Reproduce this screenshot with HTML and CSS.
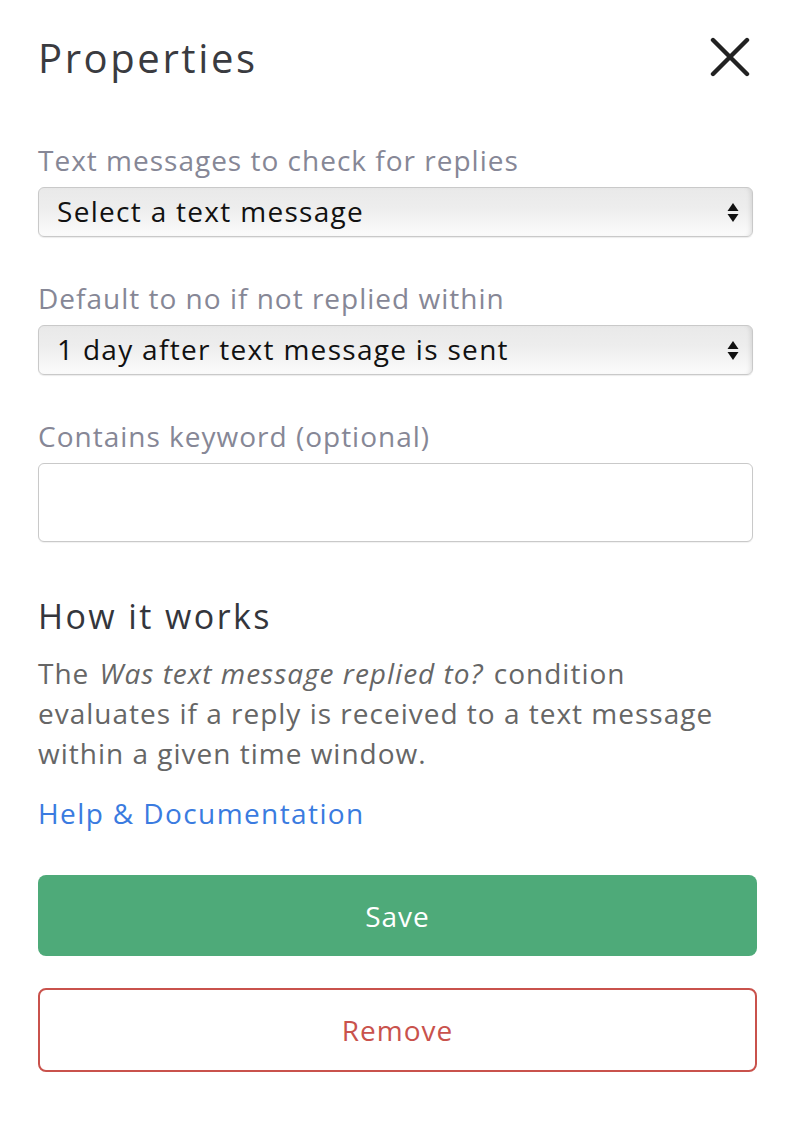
FILE: index.html
```html
<!DOCTYPE html>
<html lang="en">
<head>
<meta charset="utf-8">
<title>Properties</title>
<link rel="stylesheet" href="styles.css">
</head>
<body>
<div class="panel">
  <header class="panel-header">
    <h1 class="panel-title">Properties</h1>
    <button class="close-btn" aria-label="Close">
      <svg viewBox="0 0 40 40" width="40" height="40"><path d="M3 3 L37 37 M37 3 L3 37" stroke="#222" stroke-width="4.4" stroke-linecap="round" fill="none"/></svg>
    </button>
  </header>

  <div class="field field-first">
    <label class="field-label">Text messages to check for replies</label>
    <div class="select">
      <span class="select-value">Select a text message</span>
      <svg class="select-arrows" viewBox="0 0 12 24" width="12" height="24"><path d="M6 3 L11.5 11 L0.5 11 Z M0.5 14 L11.5 14 L6 22 Z" fill="#111"/></svg>
    </div>
  </div>

  <div class="field">
    <label class="field-label">Default to no if not replied within</label>
    <div class="select">
      <span class="select-value">1 day after text message is sent</span>
      <svg class="select-arrows" viewBox="0 0 12 24" width="12" height="24"><path d="M6 3 L11.5 11 L0.5 11 Z M0.5 14 L11.5 14 L6 22 Z" fill="#111"/></svg>
    </div>
  </div>

  <div class="field">
    <label class="field-label">Contains keyword (optional)</label>
    <input class="text-input" type="text">
  </div>

  <section class="how">
    <h2 class="how-title">How it works</h2>
    <p class="how-text"><span>The </span><em class="cond">Was text message replied to?</em><span> condition </span><span>evaluates if a reply is received to a text message within a given time window.</span></p>
    <a class="help-link" href="#">Help &amp; Documentation</a>
  </section>

  <div class="actions">
    <button class="btn btn-save">Save</button>
    <button class="btn btn-remove">Remove</button>
  </div>
</div>
</body>
</html>
```

FILE: styles.css
```css
* { box-sizing: border-box; }
html, body { margin: 0; padding: 0; background: #fff; }
body { font-family: "Open Sans", "Noto Sans", sans-serif; }

.panel {
  width: 790px;
  padding: 28px 33px 0 38px;
}

.panel-header {
  display: flex;
  align-items: center;
  justify-content: space-between;
  height: 60px;
}
.panel-title {
  margin: 0;
  font-size: 40px;
  line-height: 60px;
  font-weight: 500;
  color: #3a3b40;
  letter-spacing: 2.6px;
}
.close-btn {
  background: none;
  border: 0;
  padding: 0;
  width: 40px;
  height: 40px;
  margin-right: 7px;
  margin-bottom: 2px;
  cursor: pointer;
}
.close-btn svg { display: block; }

.field { margin-top: 43px; width: 715px; }
.field-first { margin-top: 54px; }
.field-label {
  display: block;
  font-size: 28px;
  line-height: 36px;
  letter-spacing: 1px;
  color: #868796;
  margin-bottom: 9px;
}
.select {
  display: flex;
  align-items: center;
  justify-content: space-between;
  height: 50px;
  padding: 0 13px 2px 18px;
  border: 1px solid #c9c9c9;
  border-radius: 6px;
  background: linear-gradient(to bottom, #e9e9e9 0%, #ededed 40%, #fbfbfb 100%);
  box-shadow: inset -4px 0 5px -3px rgba(0,0,0,0.12), 0 1px 1px rgba(0,0,0,0.08);
}
.select-value {
  font-size: 28px;
  letter-spacing: 1.3px;
  color: #111;
}
.select-arrows { display: block; margin-top: 2px; }

.text-input {
  display: block;
  width: 715px;
  height: 79px;
  border: 1px solid #c9c9c9;
  border-radius: 6px;
  background: #fff;
  box-shadow: 0 1px 1px rgba(0,0,0,0.06);
  font: inherit;
  font-size: 28px;
  padding: 0 16px;
}

.how { margin-top: 52px; }
.how-title {
  margin: 0;
  font-size: 34px;
  font-weight: 500;
  color: #34363c;
  letter-spacing: 2.4px;
  line-height: 44px;
}
.how-text {
  margin: 15px 0 0;
  font-size: 28px;
  line-height: 40px;
  letter-spacing: 1px;
  color: #666;
  width: 715px;
}
.cond { display: inline-block; padding: 0 2px; }
.help-link {
  display: inline-block;
  margin-top: 20px;
  font-size: 28px;
  line-height: 40px;
  letter-spacing: 1.4px;
  color: #3a7be0;
  text-decoration: none;
}

.actions {
  display: flex;
  flex-direction: column;
  gap: 32px;
  margin-top: 42px;
  width: 719px;
}
.btn {
  font: inherit;
  font-size: 28px;
  letter-spacing: 1px;
  border-radius: 8px;
  cursor: pointer;
}
.btn-save {
  height: 81px;
  background: #4eaa79;
  color: #fff;
  border: 0;
}
.btn-remove {
  height: 84px;
  background: #fff;
  color: #c9524c;
  border: 2px solid #c9524c;
}
```
